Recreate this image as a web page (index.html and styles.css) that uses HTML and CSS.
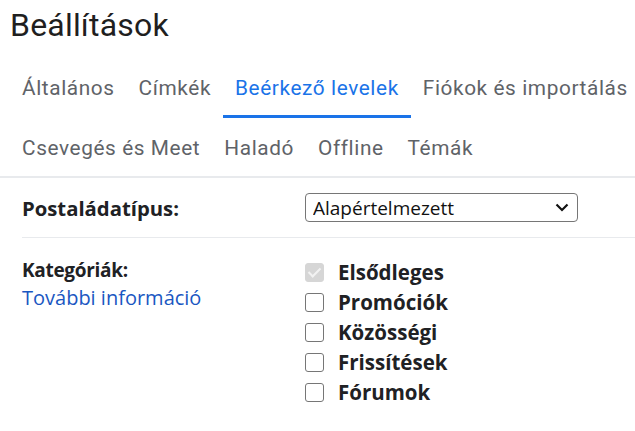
FILE: index.html
```html
<!DOCTYPE html>
<html lang="hu">
<head>
    <meta charset="UTF-8">
    <meta name="viewport" content="width=device-width, initial-scale=1.0">
    <title>Beállítások</title>
    <link rel="stylesheet" href="styles.css">
</head>
<body>
    <div class="settings">
        <h1>Beállítások</h1>

        <nav class="tabs">
            <div class="tab-row">
                <a class="tab">Általános</a>
                <a class="tab">Címkék</a>
                <a class="tab active">Beérkező levelek</a>
                <a class="tab">Fiókok és importálás</a>
            </div>
            <div class="tab-row">
                <a class="tab">Csevegés és Meet</a>
                <a class="tab">Haladó</a>
                <a class="tab">Offline</a>
                <a class="tab">Témák</a>
            </div>
        </nav>

        <div class="option-row inbox-type">
            <div class="option-label">Postaládatípus:</div>
            <div class="option-value">
                <div class="select-wrap">
                    <select class="select">
                        <option>Alapértelmezett</option>
                        <option>Először a fontosak</option>
                        <option>Először az olvasatlanok</option>
                        <option>Először a csillagozottak</option>
                    </select>
                    <svg class="select-arrow" width="14" height="9" viewBox="0 0 14 9">
                        <path d="M1.5 1.5 L7 7 L12.5 1.5" fill="none" stroke="#111" stroke-width="2.2"/>
                    </svg>
                </div>
            </div>
        </div>

        <div class="option-row categories">
            <div class="option-label">
                Kategóriák:
                <a class="more-info" href="#">További információ</a>
            </div>
            <div class="option-value">
                <label class="check"><input type="checkbox" checked disabled> Elsődleges</label>
                <label class="check"><input type="checkbox"> Promóciók</label>
                <label class="check"><input type="checkbox"> Közösségi</label>
                <label class="check"><input type="checkbox"> Frissítések</label>
                <label class="check"><input type="checkbox"> Fórumok</label>
            </div>
        </div>
    </div>
</body>
</html>
```

FILE: styles.css
```css
:root {
    --text-color: #202124;
    --tab-color: #5f6368;
    --blue: #1a73e8;
    --link-color: #1a57c2;
    --line-color: #e8eaed;
}

body {
    margin: 0;
    font-family: 'Open Sans', Roboto, Arial, sans-serif;
    color: var(--text-color);
    background: #fff;
    overflow: hidden;
}

h1 {
    margin: 0;
    padding: 6px 0 0 10px;
    height: 54px;
    font-family: Roboto, Arial, sans-serif;
    font-size: 32px;
    font-weight: 400;
    line-height: 38px;
    letter-spacing: 0.2px;
    color: #1f1f1f;
}

.tabs {
    border-bottom: 2px solid var(--line-color);
}

.tab-row {
    display: flex;
    padding-left: 10px;
    white-space: nowrap;
}

.tab {
    padding: 0 12px;
    height: 58px;
    line-height: 56px;
    font-family: Roboto, Arial, sans-serif;
    font-size: 20.8px;
    letter-spacing: 0.6px;
    color: var(--tab-color);
    border-bottom: 3px solid transparent;
    box-sizing: border-box;
    cursor: pointer;
}

.tab.active {
    color: var(--blue);
    border-bottom-color: var(--blue);
}

.tab-row + .tab-row .tab {
    height: 58px;
    line-height: 60px;
    border-bottom: none;
}

.option-row {
    display: flex;
    margin: 0 0 0 22px;
}

.inbox-type {
    height: 59px;
    align-items: center;
    border-bottom: 1px solid var(--line-color);
}

.option-label {
    width: 283px;
    font-weight: 700;
    font-size: 19px;
}

.inbox-type .option-label {
    font-size: 20.3px;
}

.select-wrap {
    position: relative;
    width: 273px;
}

.select {
    appearance: none;
    width: 100%;
    height: 29px;
    padding: 0 30px 0 7px;
    border: 1px solid #767676;
    border-radius: 4px;
    background: #fff;
    font-family: 'Open Sans', Arial, sans-serif;
    font-size: 19px;
    color: #111;
}

.select-arrow {
    position: absolute;
    right: 9px;
    top: 10px;
    pointer-events: none;
}

.categories {
    padding-top: 19px;
}

.categories .option-label {
    padding-top: 2px;
    line-height: 22px;
    letter-spacing: -0.3px;
}

.more-info {
    display: block;
    margin-top: 6px;
    font-weight: 400;
    font-size: 20px;
    letter-spacing: 0;
    color: var(--link-color);
    text-decoration: none;
}

.option-value {
    display: flex;
    flex-direction: column;
}

.check {
    display: flex;
    align-items: center;
    height: 30px;
    font-weight: 700;
    font-size: 20.5px;
    color: var(--text-color);
}

.check input {
    appearance: none;
    width: 19px;
    height: 19px;
    margin: 0 14px 0 0;
    border: 1.5px solid #767676;
    border-radius: 3px;
    background: #fff;
    position: relative;
}

.check input:checked:disabled {
    border-color: #d6d6d6;
    background: #d6d6d6;
}

.check input:checked::after {
    content: "";
    position: absolute;
    left: 5px;
    top: 1px;
    width: 5px;
    height: 10px;
    border: solid #f2f2f2;
    border-width: 0 2px 2px 0;
    transform: rotate(45deg);
}
```
